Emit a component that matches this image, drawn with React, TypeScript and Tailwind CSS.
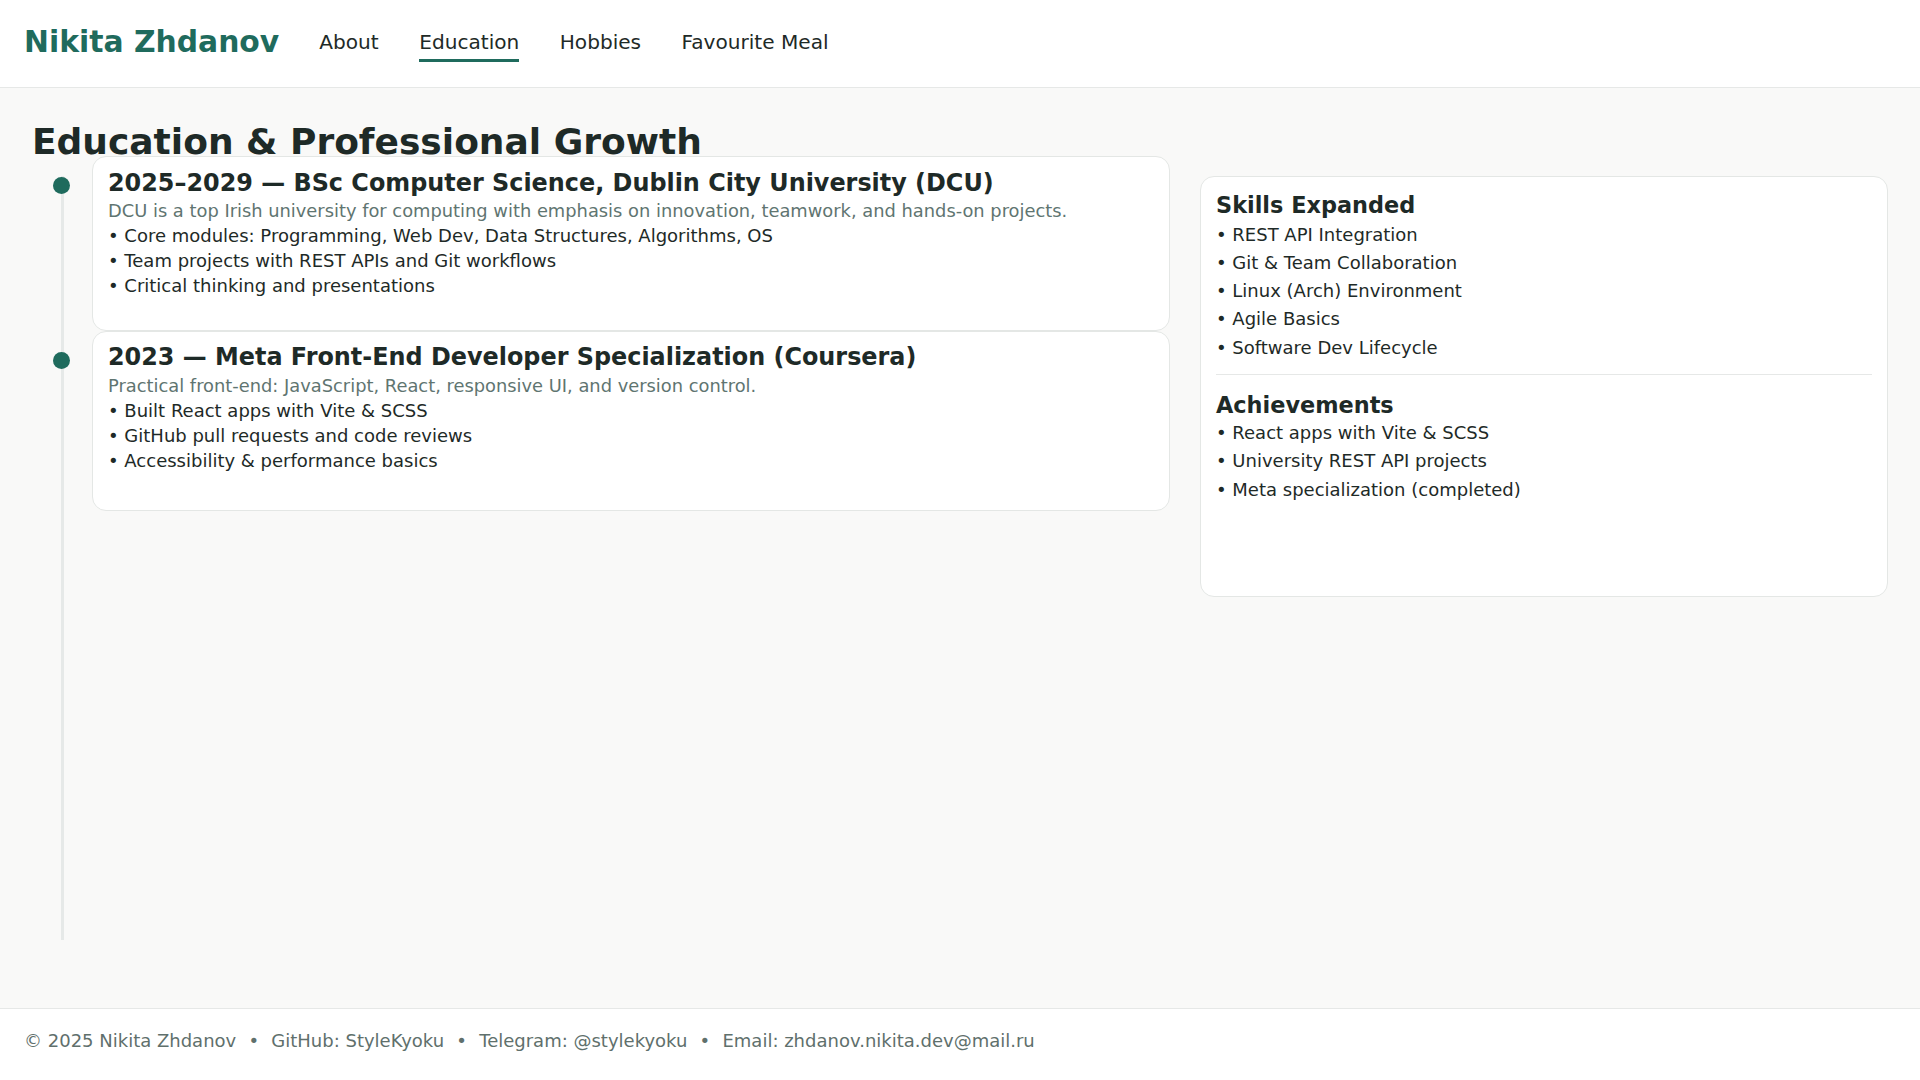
import React from "react";

function TimelineItem({
  title,
  desc,
  bullets,
  pb,
}: {
  title: string;
  desc: string;
  bullets: string[];
  pb: string;
}) {
  return (
    <div className="relative">
      <span className="absolute left-[-39px] top-[21px] h-[17px] w-[17px] rounded-full bg-[#1f6b5d]" />
      <div className={`rounded-[14px] border border-[#e4e7e5] bg-white px-[15px] pt-[11.5px] ${pb}`}>
        <h3 className="text-[23.9px] font-bold leading-[1.2] text-[#1e2a27]">{title}</h3>
        <p className="mt-[1px] text-[17.85px] leading-[25px] text-[#5f7571]">{desc}</p>
        <ul className="text-[18px] leading-[25px] text-[#1e2a27]">
          {bullets.map((b) => (
            <li key={b}>• {b}</li>
          ))}
        </ul>
      </div>
    </div>
  );
}

export default function App() {
  return (
    <div className="flex min-h-screen flex-col bg-[#f9f9f8] font-['DejaVu_Sans',sans-serif] text-[#1e2a27]">
      <header className="flex h-[88px] items-center gap-10 border-b border-[#e6e8e7] bg-white px-6">
        <a className="mb-[3px] text-[29.8px] font-bold leading-none text-[#1f6b5d]">Nikita Zhdanov</a>
        <nav className="mt-[3px] flex items-center gap-[40.5px] text-[20.1px] leading-[28px] text-[#1e2a27]">
          <a className="border-b-[3px] border-transparent pb-[3px]">About</a>
          <a className="border-b-[3px] border-[#1f6b5d] pb-[3px]">Education</a>
          <a className="border-b-[3px] border-transparent pb-[3px]">Hobbies</a>
          <a className="border-b-[3px] border-transparent pb-[3px]">Favourite Meal</a>
        </nav>
      </header>

      <main className="flex flex-1 gap-[30px] px-8 pb-[68px] pt-[40px]">
        <div className="flex w-[1138px] flex-col">
          <h1 className="text-[36px] font-bold leading-[28px] text-[#1e2a27]">
            Education &amp; Professional Growth
          </h1>
          <div className="relative flex-1 pl-[60px]">
            <span className="absolute bottom-0 left-[29px] top-[20px] w-[3px] bg-[#e6e9e8]" />
            <TimelineItem
              title="2025–2029 — BSc Computer Science, Dublin City University (DCU)"
              desc="DCU is a top Irish university for computing with emphasis on innovation, teamwork, and hands-on projects."
              bullets={[
                "Core modules: Programming, Web Dev, Data Structures, Algorithms, OS",
                "Team projects with REST APIs and Git workflows",
                "Critical thinking and presentations",
              ]}
              pb="pb-[31.5px]"
            />
            <TimelineItem
              title="2023 — Meta Front-End Developer Specialization (Coursera)"
              desc="Practical front-end: JavaScript, React, responsive UI, and version control."
              bullets={[
                "Built React apps with Vite & SCSS",
                "GitHub pull requests and code reviews",
                "Accessibility & performance basics",
              ]}
              pb="pb-[37.5px]"
            />
          </div>
        </div>

        <aside className="mt-[48px] flex-1">
          <div className="h-[421px] rounded-[14px] border border-[#e4e7e5] bg-white px-[15px] pt-[15px]">
            <h3 className="mb-[2px] text-[22.4px] font-bold leading-[1.2] text-[#1e2a27]">Skills Expanded</h3>
            <ul className="mb-[12.5px] text-[18px] leading-[28.2px]">
              <li>• REST API Integration</li>
              <li>• Git &amp; Team Collaboration</li>
              <li>• Linux (Arch) Environment</li>
              <li>• Agile Basics</li>
              <li>• Software Dev Lifecycle</li>
            </ul>
            <div className="border-t border-[#e6e8e7]" />
            <h3 className="mt-[17px] text-[22.4px] font-bold leading-[1.2] text-[#1e2a27]">Achievements</h3>
            <ul className="text-[18px] leading-[28.2px]">
              <li>• React apps with Vite &amp; SCSS</li>
              <li>• University REST API projects</li>
              <li>• Meta specialization (completed)</li>
            </ul>
          </div>
        </aside>
      </main>

      <footer className="h-[72px] border-t border-[#e6e8e7] bg-white px-6 pt-[22px] text-[18px] leading-[20.5px] text-[#5f706c]">
        © 2025 Nikita Zhdanov <span className="mx-[6.5px]">•</span> GitHub: StyleKyoku{" "}
        <span className="mx-[6.5px]">•</span> Telegram: @stylekyoku <span className="mx-[6.5px]">•</span> Email:
        zhdanov.nikita.dev@mail.ru
      </footer>
    </div>
  );
}
